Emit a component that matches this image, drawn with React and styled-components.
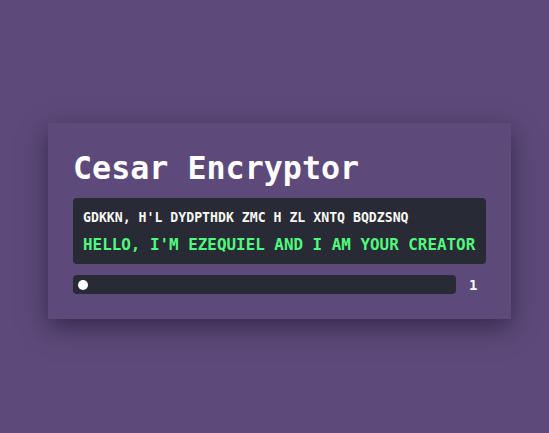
import React, { useEffect, useRef, useState } from "react";
import styled, { createGlobalStyle } from "styled-components";

const GlobalStyle = createGlobalStyle`
  html, body {
    margin: 0;
    padding: 0;
    background-color: #5d4a7b;
    font-family: "DejaVu Sans Mono", "Liberation Mono", monospace;
  }
`;

const Page = styled.div`
  min-height: 433px;
  box-sizing: border-box;
  padding: 123px 38px 0 48px;
  display: flex;
  align-items: flex-start;
`;

const Card = styled.div`
  width: 463px;
  box-sizing: border-box;
  padding: 25px;
  background-color: #5d4a7b;
  box-shadow: 0 8px 24px rgba(20, 12, 35, 0.55);
`;

const Title = styled.h1`
  margin: 2px 0 11px;
  font-size: 31.7px;
  font-weight: bold;
  line-height: 37px;
  color: #ffffff;
  white-space: nowrap;
`;

const Box = styled.div`
  display: flex;
  flex-direction: column;
  gap: 8px;
  padding: 9px 10px 10px;
  background-color: #282a36;
  border-radius: 4px;
`;

const CipherInput = styled.input`
  height: 20px;
  padding: 0;
  border: none;
  outline: none;
  background: transparent;
  font-family: inherit;
  font-size: 13.2px;
  font-weight: bold;
  color: #f8f8f2;
  caret-color: #ffffff;
`;

const Output = styled.p`
  margin: 0;
  font-size: 15.9px;
  font-weight: bold;
  line-height: 19px;
  color: #50fa7b;
  white-space: nowrap;
`;

const SliderRow = styled.div`
  display: flex;
  align-items: center;
  gap: 13px;
  margin-top: 11px;
`;

const Track = styled.div`
  flex: 1;
  height: 19px;
  display: flex;
  align-items: center;
  padding: 0 5px;
  background-color: #282a36;
  border-radius: 4px;
`;

const Range = styled.input`
  -webkit-appearance: none;
  appearance: none;
  width: 100%;
  height: 19px;
  margin: 0;
  background: transparent;
  outline: none;

  &::-webkit-slider-runnable-track {
    height: 19px;
    background: transparent;
  }

  &::-webkit-slider-thumb {
    -webkit-appearance: none;
    width: 10px;
    height: 10px;
    margin-top: 4.5px;
    border-radius: 50%;
    background: #ffffff;
    border: none;
  }
`;

const Count = styled.span`
  width: 17px;
  font-size: 14px;
  font-weight: bold;
  color: #f8f8f2;
`;

const shift = (text, n) =>
  text.replace(/[A-Z]/g, (c) =>
    String.fromCharCode(((c.charCodeAt(0) - 65 + n) % 26) + 65)
  );

const App = () => {
  const [cipher, setCipher] = useState("GDKKN, H'L DYDPTHDK ZMC H ZL XNTQ BQDZSNQ");
  const [key, setKey] = useState(1);
  const inputRef = useRef(null);

  useEffect(() => {
    const el = inputRef.current;
    if (el) {
      el.focus();
      el.setSelectionRange(el.value.length, el.value.length);
    }
  }, []);

  return (
    <Page>
      <GlobalStyle />
      <Card>
        <Title>Cesar Encryptor</Title>
        <Box>
          <CipherInput
            ref={inputRef}
            value={cipher}
            onChange={(e) => setCipher(e.target.value.toUpperCase())}
            spellCheck={false}
          />
          <Output>{shift(cipher, key)}</Output>
        </Box>
        <SliderRow>
          <Track>
            <Range
              type="range"
              min="1"
              max="25"
              value={key}
              onChange={(e) => setKey(Number(e.target.value))}
            />
          </Track>
          <Count>{key}</Count>
        </SliderRow>
      </Card>
    </Page>
  );
};

export default App;
